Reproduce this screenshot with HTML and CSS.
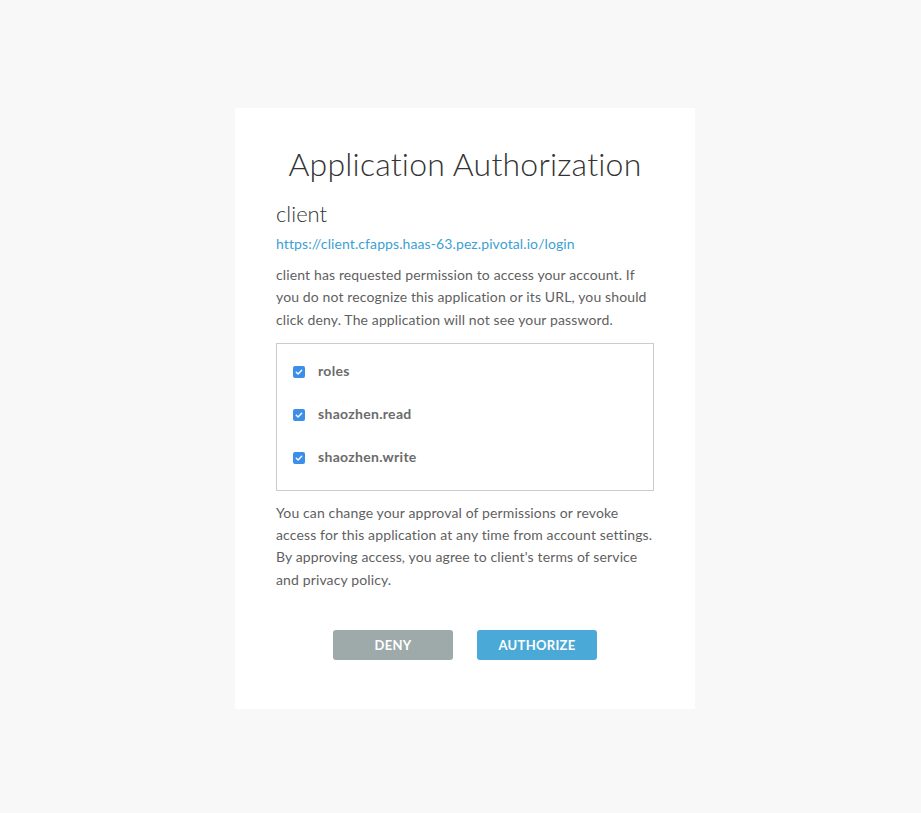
FILE: index.html
```html
<!DOCTYPE html>
<html>
<head>
<meta charset="utf-8">
<link rel="stylesheet" href="styles.css">
</head>
<body>
<div class="page">
  <div class="card">
    <h1 class="title">Application Authorization</h1>
    <h2 class="client">client</h2>
    <a class="url" href="#">https://client.cfapps.haas-63.pez.pivotal.io/login</a>
    <p class="text intro">client has requested permission to access your account. If you do not recognize this application or its URL, you should click deny. The application will not see your password.</p>
    <div class="scopes">
      <label class="scope"><span class="check"><svg viewBox="0 0 12 12" width="12" height="12"><path d="M3.3 6.2 L5.1 7.9 L8.7 4.2" fill="none" stroke="#fff" stroke-width="1.4" stroke-linecap="round" stroke-linejoin="round"/></svg></span><span class="scope-name">roles</span></label>
      <label class="scope"><span class="check"><svg viewBox="0 0 12 12" width="12" height="12"><path d="M3.3 6.2 L5.1 7.9 L8.7 4.2" fill="none" stroke="#fff" stroke-width="1.4" stroke-linecap="round" stroke-linejoin="round"/></svg></span><span class="scope-name">shaozhen.read</span></label>
      <label class="scope"><span class="check"><svg viewBox="0 0 12 12" width="12" height="12"><path d="M3.3 6.2 L5.1 7.9 L8.7 4.2" fill="none" stroke="#fff" stroke-width="1.4" stroke-linecap="round" stroke-linejoin="round"/></svg></span><span class="scope-name">shaozhen.write</span></label>
    </div>
    <p class="text outro">You can change your approval of permissions or revoke access for this application at any time from account settings. By approving access, you agree to client's terms of service and privacy policy.</p>
    <div class="actions">
      <button class="btn deny">DENY</button>
      <button class="btn authorize">AUTHORIZE</button>
    </div>
  </div>
</div>
</body>
</html>
```
FILE: styles.css
```css
html, body {
  margin: 0;
  padding: 0;
  background: #f8f8f8;
  font-family: "Lato", "Open Sans", sans-serif;
}
.page {
  display: flex;
  justify-content: center;
  padding-top: 108px;
  padding-left: 9px;
}
.card {
  width: 378px;
  background: #fff;
  padding: 37px 41px 49px;
  display: flex;
  flex-direction: column;
}
.title {
  margin: 0;
  text-align: center;
  font-weight: 300;
  font-size: 32px;
  line-height: 38px;
  color: #333;
  letter-spacing: 0.2px;
}
.client {
  margin: 18px 0 0;
  font-weight: 300;
  font-size: 22px;
  line-height: 26px;
  color: #333;
}
.url {
  margin-top: 8px;
  font-size: 14px;
  line-height: 18px;
  color: #3d9fd4;
  text-decoration: none;
  letter-spacing: 0.1px;
}
.text {
  margin: 0;
  font-size: 14px;
  line-height: 22.3px;
  color: #5f5f5f;
  letter-spacing: 0.13px;
}
.intro {
  margin-top: 11px;
}
.scopes {
  margin-top: 12px;
  border: 1px solid #ccc;
  padding: 16px 16px 22px;
  display: flex;
  flex-direction: column;
  gap: 21px;
}
.scope {
  display: flex;
  align-items: center;
  height: 22px;
}
.check {
  width: 12px;
  height: 12px;
  border-radius: 2px;
  background: #3b8fe8;
  display: flex;
  margin-top: 2px;
}
.scope-name {
  margin-left: 13px;
  font-size: 14px;
  font-weight: 700;
  color: #6b6b6b;
  letter-spacing: 0.3px;
}
.outro {
  margin-top: 11px;
}
.actions {
  margin-top: 39px;
  display: flex;
  justify-content: center;
  gap: 24px;
}
.btn {
  width: 120px;
  height: 30px;
  border: none;
  border-radius: 3px;
  color: #fff;
  font-family: inherit;
  font-weight: 700;
  font-size: 13px;
  letter-spacing: 0.3px;
  cursor: pointer;
}
.deny { background: #9eaaaa; }
.authorize { background: #4aa9d6; }
```
